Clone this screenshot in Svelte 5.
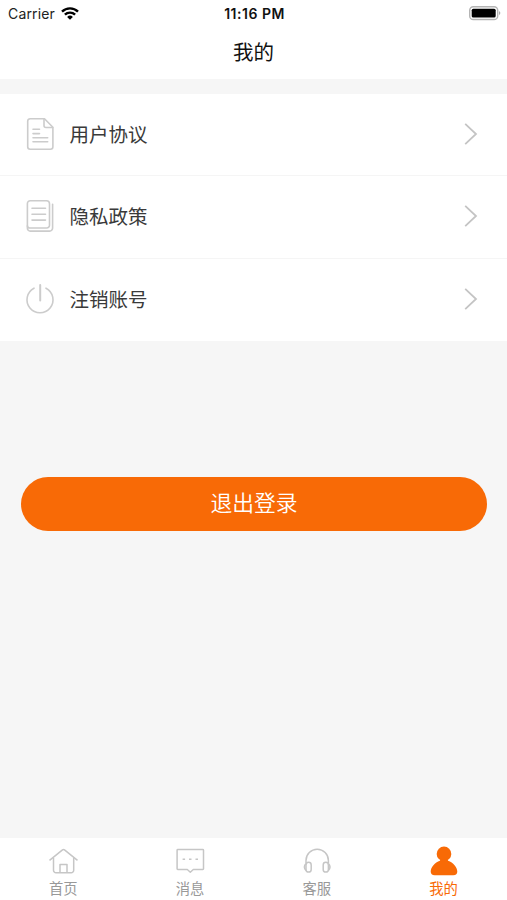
<script lang="ts">
  const rows = [
    { icon: 'document', label: '用户协议' },
    { icon: 'book', label: '隐私政策' },
    { icon: 'power', label: '注销账号' },
  ];

  const tabs = [
    { id: 'home', label: '首页' },
    { id: 'message', label: '消息' },
    { id: 'service', label: '客服' },
    { id: 'mine', label: '我的' },
  ];

  let active = $state('mine');
</script>

<div class="screen">
  <header>
    <div class="status-bar">
      <div class="carrier">
        <span>Carrier</span>
        <svg class="wifi" viewBox="0 0 18 13" width="18" height="13">
          <path d="M1 4.700a11.400 11.400 0 0 1 16 0" />
          <path d="M3.900 7.700a7.200 7.200 0 0 1 10.200 0" />
          <path class="dot" d="M9 12.700 6.100 9.900a4.200 4.200 0 0 1 5.800 0Z" />
        </svg>
      </div>
      <span class="time">11:16 PM</span>
      <div class="battery">
        <svg viewBox="0 0 33 16" width="33" height="16">
          <rect x="1.7" y="1.7" width="28" height="12.800" rx="3.600" fill="#fff" stroke="#b4b4b4" stroke-width="1.400" />
          <rect x="3.700" y="3.700" width="24" height="8.800" rx="1.600" fill="#000" />
          <path d="M31.200 6v4.200q2.200-2.100 0-4.200Z" fill="#999" />
        </svg>
      </div>
    </div>
    <h1>我的</h1>
  </header>

  <ul class="menu">
    {#each rows as row}
      <li>
        <svg class="row-icon" viewBox="0 0 32 36" width="32" height="36">
          {#if row.icon === 'document'}
            <path d="M20.500 2.700H6.200a2.500 2.500 0 0 0-2.500 2.500v25.600a2.500 2.500 0 0 0 2.500 2.500h20.200a2.500 2.500 0 0 0 2.500-2.500V11.200Z" />
            <path d="M20 3v6.500a2 2 0 0 0 2 2h6.600" />
            <path d="M9 13.300h6.500M9 17.600h6.500M9 21.700h14.700M9 25.800h14.700" />
          {:else if row.icon === 'book'}
            <path d="M6.200 2.700h16.300a3 3 0 0 1 3 3v21.500a2.800 2.800 0 0 1-2.800 2.800H5.700a2.300 2.300 0 0 1-2.300-2.300V5.500a2.800 2.800 0 0 1 2.800-2.800Z" />
            <path d="M3.400 27.700v2.600a2.800 2.800 0 0 0 2.800 2.800h19.400a3 3 0 0 0 3-3V6.300" />
            <path d="M8 10.300h13.500M8 16.200h13.500M8 22.100h13.500" />
          {:else}
            <path d="M10 7.200a13 13 0 1 0 12 0" />
            <path class="thick" d="M16.200 4v15.500" />
          {/if}
        </svg>
        <span class="label">{row.label}</span>
        <svg class="chevron" viewBox="0 0 14 24" width="14" height="24">
          <path d="M1.200 1.800 12 12 1.200 22.200" />
        </svg>
      </li>
    {/each}
  </ul>

  <button class="logout" type="button">退出登录</button>

  <nav>
    {#each tabs as tab}
      <button
        type="button"
        class="tab"
        class:active={active === tab.id}
        onclick={() => (active = tab.id)}
      >
        <svg viewBox="0 0 30 32" width="30" height="32">
          {#if tab.id === 'home'}
            <path d="M1.500 15.300 14.500 4.800q1-.8 2 0L29.500 15.300" />
            <path d="M5.500 12.800v12.400a2.500 2.500 0 0 0 2.500 2.500h15.200a2.500 2.500 0 0 0 2.500-2.500V12.800" />
            <path d="M12 27.700v-8.200h7v8.200" />
          {:else if tab.id === 'message'}
            <path d="M2.800 4.500h25a.7.7 0 0 1 .7.700v18.600a.7.7 0 0 1-.7.700h-9.500l-3 2.700-3-2.700H2.800a.7.7 0 0 1-.7-.7V5.200a.7.7 0 0 1 .7-.7Z" />
            <path d="M7.600 14.200h2.500M14 14.200h2.500M20.500 14.200h2.500" />
          {:else if tab.id === 'service'}
            <path d="M4 18v-2.500a11.200 11.200 0 0 1 22.400 0V18" />
            <rect x="4" y="17.300" width="5.200" height="9.700" rx="2.600" />
            <rect x="21.200" y="17.300" width="5.200" height="9.700" rx="2.600" />
            <path d="M4 18.500q-3.200 3.500 0 7M26.400 18.500q3.200 3.500 0 7" />
          {:else}
            <circle class="fill" cx="15" cy="8.900" r="7.300" />
            <path class="fill" d="M11.500 14.300h7l.6 1.500c5 1.800 9.200 6.500 9.200 10.800q0 3.600-4 3.600H5.700q-4 0-4-3.600c0-4.300 4.200-9 9.200-10.800Z" />
          {/if}
        </svg>
        <span>{tab.label}</span>
      </button>
    {/each}
  </nav>
</div>

<style>
  :global(body) {
    margin: 0;
  }

  .screen {
    display: flex;
    flex-direction: column;
    height: 900px;
    overflow: hidden;
    background: #f6f6f6;
    color: #3a3a3a;
    font-family: "Noto Sans CJK SC", sans-serif;
  }

  header {
    height: 79px;
    background: #fff;
  }

  .status-bar {
    display: grid;
    grid-template-columns: 1fr auto 1fr;
    align-items: center;
    height: 26px;
    padding: 0 6px 0 8px;
    font-family: Inter, sans-serif;
    font-size: 14px;
    color: #222;
  }

  .carrier {
    display: flex;
    align-items: center;
    gap: 6px;
    padding-top: 1px;
    letter-spacing: 0.15px;
  }

  .wifi {
    fill: none;
    stroke: #000;
    stroke-width: 2.4;
  }

  .wifi .dot {
    fill: #000;
    stroke: none;
  }

  .time {
    padding-top: 1px;
    font-size: 14px;
    font-weight: 600;
    letter-spacing: 0.5px;
    color: #111;
  }

  .battery {
    display: flex;
    justify-content: flex-end;
  }

  h1 {
    margin: 0;
    font-size: 20.5px;
    font-weight: 400;
    line-height: 50px;
    text-align: center;
    color: #111;
  }

  .menu {
    margin: 15px 0 0;
    padding: 0;
    list-style: none;
    background: #fff;
  }

  li {
    display: flex;
    align-items: center;
    box-sizing: border-box;
    height: 82.3px;
    padding: 0 29px 1px 24px;
    border-bottom: 1px solid #f5f5f5;
  }

  li:last-child {
    border-bottom-color: #fff;
  }

  .row-icon {
    fill: none;
    stroke: #ccc;
    stroke-width: 1.6;
    stroke-linecap: round;
    stroke-linejoin: round;
  }

  .row-icon .thick {
    stroke-width: 2;
  }

  .label {
    flex: 1;
    margin-left: 13.5px;
    font-size: 19.5px;
    line-height: 28px;
  }

  .chevron {
    fill: none;
    stroke: #c4c4c4;
    stroke-width: 1.8;
  }

  button {
    padding: 0;
    border: 0;
    font-family: inherit;
    cursor: pointer;
  }

  .logout {
    height: 54px;
    margin: 136px 20px 0 21px;
    padding-bottom: 4px;
    border-radius: 27px;
    background: #f86a06;
    color: #fff;
    font-size: 21.8px;
    font-weight: 350;
  }

  nav {
    display: grid;
    grid-template-columns: repeat(4, 1fr);
    height: 62px;
    margin-top: auto;
    background: #fff;
  }

  .tab {
    display: flex;
    flex-direction: column;
    align-items: center;
    padding-top: 7px;
    background: none;
    color: #999;
    font-size: 14.3px;
    line-height: 22px;
  }

  .tab svg {
    flex-shrink: 0;
    fill: none;
    stroke: #c6c6c6;
    stroke-width: 1.5;
    stroke-linejoin: round;
  }

  .tab svg .fill {
    fill: #f86a06;
    stroke: none;
  }

  .tab.active {
    color: #f86a06;
  }
</style>
